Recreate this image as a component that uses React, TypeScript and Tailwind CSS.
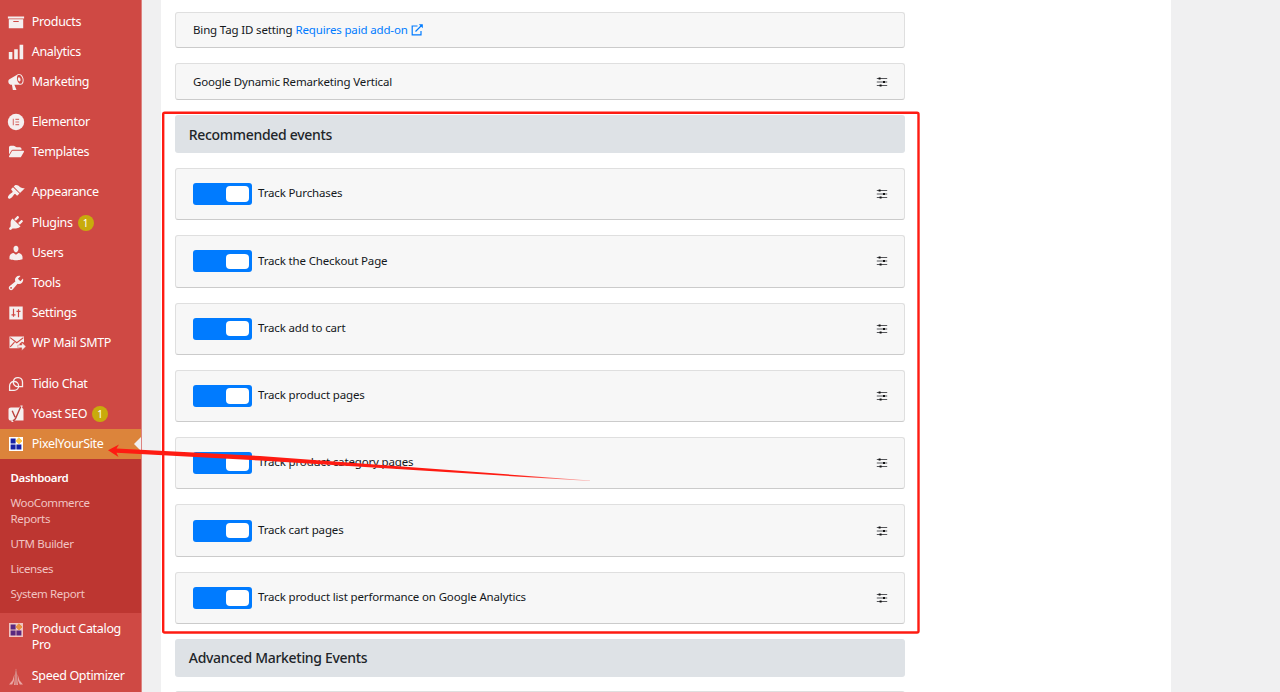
import React from 'react';
import { FaFolderOpen } from 'react-icons/fa6';
import { clsx } from 'clsx';

const Dashicon = ({ d }: { d: string }) => (
  <svg viewBox="0 0 20 20" className="h-[18px] w-[18px]" fill="currentColor">
    <path d={d} />
  </svg>
);

const icons = {
  archive: 'M19 4v2H1V4h18zM2 7h16v10H2V7zm11 3V9H7v1h6z',
  chart: 'M18 18V2h-4v16h4zm-6 0V7H8v11h4zm-6 0v-8H2v8h4z',
  megaphone:
    'M18.15 5.94c.46 1.62.38 3.22-.02 4.48-.42 1.28-1.26 2.18-2.3 2.48-.16.06-.26.06-.4.06-.06.02-.12.02-.18.02-.06.02-.14.02-.22.02h-6.8l2.22 5.5c.02.14-.06.26-.14.34-.08.1-.24.16-.34.16H6.95c-.1 0-.26-.06-.34-.16-.08-.08-.16-.2-.14-.34l-1-5.5H4.25l-.02-.02c-.5.06-1.08-.18-1.54-.62s-.88-1.08-1.06-1.88c-.24-.8-.2-1.56-.02-2.2.18-.62.58-1.08 1.06-1.3l.02-.02 9-5.4c.1-.06.18-.1.24-.16.06-.04.14-.08.24-.12.16-.08.28-.12.5-.18 1.04-.3 2.24.1 3.22.98s1.84 2.24 2.26 3.86zm-2.58 5.98h-.02c.4-.1.74-.34 1.04-.7.58-.7.86-1.76.86-3.04 0-.64-.1-1.3-.28-1.98-.34-1.36-1.02-2.5-1.78-3.24s-1.68-1.1-2.46-.88c-.82.22-1.4.96-1.7 2-.32 1.04-.28 2.36.06 3.72.38 1.36 1 2.5 1.8 3.24.78.74 1.62 1.1 2.48.88zm-2.54-7.08c.22-.04.42-.02.62.04.38.16.76.48 1.02 1s.42 1.2.42 1.78c0 .3-.04.56-.12.8-.18.48-.44.84-.86.94-.34.1-.8-.06-1.14-.4s-.64-.86-.78-1.5c-.18-.62-.12-1.24.02-1.72s.48-.84.82-.94z',
  appearance:
    'M14.48 11.06L7.41 3.99l1.5-1.5c.5-.56 2.3-.47 3.51.32 1.21.8 1.43 1.28 2.91 2.1 1.18.64 2.45 1.26 4.45.85zm-.71.71L6.7 4.7 4.93 6.47c-.39.39-.39 1.02 0 1.41l1.06 1.06c.39.39.39 1.03 0 1.42-.6.6-1.43 1.11-2.21 1.69-.35.26-.7.53-1.01.84C1.43 14.23.4 16.08 1.4 17.07c.99 1 2.84-.03 4.18-1.36.31-.31.58-.66.85-1.02.57-.78 1.08-1.61 1.69-2.21.39-.39 1.02-.39 1.41 0l1.06 1.06c.39.39 1.02.39 1.41 0z',
  plugins:
    'M13.11 4.36L9.87 7.6 8 5.73l3.24-3.24c.35-.34 1.05-.2 1.56.32.52.51.66 1.21.31 1.55zm-8 1.77l.91-1.12 9.01 9.01-1.19.84c-.71.71-2.63 1.16-3.82 1.16H6.14L4.9 17.26c-.59.59-1.54.59-2.12 0-.59-.58-.59-1.53 0-2.12l1.24-1.24v-3.88c0-1.13.4-3.19 1.09-3.89zm7.26 3.97l3.24-3.24c.34-.35 1.04-.21 1.55.31.52.51.66 1.21.31 1.55l-3.24 3.25z',
  users:
    'M10 9.25c-2.27 0-2.73-3.44-2.73-3.44C7 4.02 7.82 2 9.97 2c2.16 0 2.98 2.02 2.71 3.81 0 0-.41 3.44-2.68 3.44zM7.28 10L10 11.82 12.72 10c2.39 0 4.52 2.33 4.52 4.53v2.49s-3.65 1.13-7.24 1.13c-3.65 0-7.24-1.13-7.24-1.13v-2.49c0-2.25 1.94-4.48 4.52-4.53z',
  tools:
    'M16.68 9.77c-1.34 1.34-3.3 1.67-4.95.99l-5.41 6.52c-.99.99-2.59.99-3.58 0s-.99-2.59 0-3.57l6.52-5.42c-.68-1.65-.35-3.61.99-4.95 1.28-1.28 3.12-1.62 4.72-1.06l-2.89 2.89 2.82 2.82 2.86-2.87c.53 1.58.18 3.39-1.08 4.65zM3.81 16.21c.4.39 1.04.39 1.43 0 .4-.4.4-1.04 0-1.43-.39-.4-1.03-.4-1.43 0-.39.39-.39 1.03 0 1.43z',
};

const ElementorIcon = () => (
  <svg viewBox="0 0 18 18" className="h-[18px] w-[18px]">
    <circle cx="9" cy="9" r="8.2" fill="currentColor" />
    <path d="M6.3 5.8v6.4M8.4 6.4h3.7M8.4 9h3.7M8.4 11.6h3.7" stroke="#d8736f" strokeWidth="1.1" />
  </svg>
);

const SettingsIcon = () => (
  <svg viewBox="0 0 18 18" className="h-[18px] w-[18px]">
    <path d="M2.3 2.5h13.4v13H2.3z" fill="currentColor" />
    <path d="M6.5 4.8v8M4.5 10.8h4M11.5 5.2v8M9.5 7.3h4" stroke="#cf4944" strokeWidth="1.2" />
  </svg>
);

const MailIcon = () => (
  <svg viewBox="0 0 18 18" className="ml-[2px] h-[18px] w-[18px] shrink-0">
    <path d="M1.5 2.5h14.5v6l-2-.8-2.5 2v4.5h-10z" fill="currentColor" />
    <path d="M2.2 3.6l6.6 5.2 6.600-5.200M2.200 12.800l4.300-4.700" stroke="#cf4944" strokeWidth="1.1" fill="none" />
    <path d="M9.800 11.100h4V8.400l4.200 4.100-4.200 4v-2.700h-4z" fill="currentColor" stroke="#cf4944" strokeWidth=".4" />
  </svg>
);

const TidioIcon = () => (
  <svg viewBox="0 0 18 18" className="h-[18px] w-[18px]" fill="none" stroke="currentColor" strokeWidth="1.3">
    <path d="M6.4 6.3A4.6 4.6 0 0 1 15.5 7v4.7h-4.6A4.6 4.6 0 0 1 6.4 6.3z" />
    <path d="M7 6.5h.2a4.4 4.4 0 0 1 0 8.8H2.6v-4.4A4.4 4.4 0 0 1 7 6.5z" />
  </svg>
);

const YoastIcon = () => (
  <svg viewBox="0 0 18 18" className="h-[18px] w-[18px]">
    <path
      d="M4 2.5h8.3L13.5.5h2.2l-.6 2.4c1 .3 1.4 1 1.4 1.9v10.7H7l-1 1.6H4.5v-1.6H4c-1.5 0-2.5-.9-2.5-2.3V4.8c0-1.4 1-2.3 2.5-2.3z"
      fill="currentColor"
    />
    <path d="M5.2 5.8l2.900 6.400M13.800 1.500L8.700 13.300c-.6 1.500-1.400 2.200-3 2.300" stroke="#b93f3b" strokeWidth="1.4" fill="none" />
  </svg>
);

const PixelIcon = ({ faded = false }: { faded?: boolean }) => (
  <svg viewBox="0 0 18 18" className="h-[18px] w-[18px]">
    <path d="M2 2h14v14H2z" fill={faded ? '#f1c4c2' : '#fff'} />
    <path d="M3.6 3.6h5v5h-5zM3.6 9.4h5v5h-5zM9.4 9.4h5v5h-5z" fill={faded ? '#592880' : '#1721a5'} />
    <path
      d="M11.8 2.8l3.2 3.1-3.1 2.9-2.8-2.9z"
      fill={faded ? '#e6913f' : '#fdc649'}
      stroke={faded ? '#e6913f' : '#fdc649'}
      strokeLinejoin="round"
    />
  </svg>
);

const SpeedIcon = () => (
  <svg viewBox="0 0 18 18" className="mt-[3px] h-[18px] w-[18px] text-[#f1c4c2]" fill="currentColor">
    <path d="M9 .5c.8 3 1.2 6 1.1 9.2l.8 7.3H7.1l.8-7.3C7.8 6.5 8.2 3.5 9 .5z" opacity=".8" />
    <path d="M7.4 6L7 12.5 5.2 16.5H2l3.6-4.2zM10.6 6l.4 6.5 1.8 4H16l-3.6-4.2z" opacity=".75" />
    <path d="M8.7 2h.6v15h-.6z" fill="#a83a36" />
  </svg>
);

const FilterIcon = () => (
  <svg viewBox="0 0 12 12" className="h-3 w-3">
    <path d="M.8 2.5h10.400M.8 6h10.400M.8 9.500h10.400" stroke="#55565a" />
    <path d="M2.6 1.500h2v2h-2zM7 5h2v2H7zM3.600 8.500h2v2h-2z" fill="#111" />
  </svg>
);

const Badge = () => (
  <span className="ml-[5px] flex h-4 w-4 items-center justify-center rounded-full bg-[#c8ab0c] text-[10px] leading-none tracking-normal text-white">1</span>
);

interface MenuItemProps {
  icon: React.ReactNode;
  label: string;
  badge?: boolean;
  active?: boolean;
}

const MenuItem = ({ icon, label, badge, active }: MenuItemProps) => (
  <div
    className={clsx(
      'relative flex h-[30.1px] shrink-0 items-center pl-[7px] text-[12.5px] leading-4 tracking-[-0.33px] text-white',
      active && 'bg-[#dc843b]'
    )}
  >
    <span className="flex w-[18px] shrink-0 justify-center text-[#f5efef]">{icon}</span>
    <span className="ml-[6.8px] whitespace-nowrap">{label}</span>
    {badge && <Badge />}
    {active && (
      <span className="absolute top-[8px] right-0 border-y-[7px] border-r-[7px] border-y-transparent border-r-[#f0f0f1]" />
    )}
  </div>
);

const Sidebar = () => (
  <aside className="flex h-[692px] w-[142px] shrink-0 flex-col overflow-hidden border-r border-[#dd8380] bg-[#cf4944] pt-[7px] font-['Noto_Sans',sans-serif]">
    <MenuItem icon={<Dashicon d={icons.archive} />} label="Products" />
    <MenuItem icon={<Dashicon d={icons.chart} />} label="Analytics" />
    <MenuItem icon={<Dashicon d={icons.megaphone} />} label="Marketing" />
    <div className="mt-[9.5px]">
      <MenuItem icon={<ElementorIcon />} label="Elementor" />
      <MenuItem icon={<FaFolderOpen size={15} />} label="Templates" />
    </div>
    <div className="mt-[9.5px]">
      <MenuItem icon={<Dashicon d={icons.appearance} />} label="Appearance" />
      <div className="mt-px">
        <MenuItem icon={<Dashicon d={icons.plugins} />} label="Plugins" badge />
      </div>
      <MenuItem icon={<Dashicon d={icons.users} />} label="Users" />
      <MenuItem icon={<Dashicon d={icons.tools} />} label="Tools" />
      <MenuItem icon={<SettingsIcon />} label="Settings" />
      <MenuItem icon={<MailIcon />} label="WP Mail SMTP" />
    </div>
    <div className="mt-[10.8px]">
      <MenuItem icon={<TidioIcon />} label="Tidio Chat" />
      <MenuItem icon={<YoastIcon />} label="Yoast SEO" badge />
      <MenuItem icon={<PixelIcon />} label="PixelYourSite" active />
    </div>
    <div className="flex h-[154px] shrink-0 flex-col gap-[8.5px] bg-[#bd3631] pt-[10.5px] pl-[10.5px] text-[11.5px] leading-[16.4px] tracking-[-0.36px] text-[#f1c4c2]">
      <span className="font-semibold text-white">Dashboard</span>
      <span className="w-[100px]">WooCommerce Reports</span>
      <span>UTM Builder</span>
      <span>Licenses</span>
      <span>System Report</span>
    </div>
    <div className="flex pt-[7.5px] pl-[7px] text-[12.5px] leading-4 tracking-[-0.33px] text-white">
      <PixelIcon faded />
      <span className="ml-[6.8px] w-[100px]">Product Catalog Pro</span>
    </div>
    <div className="mt-[8px]">
      <MenuItem icon={<SpeedIcon />} label="Speed Optimizer" />
    </div>
  </aside>
);

const cardClass =
  'flex shrink-0 items-center justify-between rounded-[3px] border border-[#dfdfdf] border-b-[#cbcbcb] bg-[#f7f7f7] pr-[16px] pl-[17.5px]';

const SectionHeader = ({ title }: { title: string }) => (
  <h2 className="flex h-[38px] shrink-0 items-center rounded-[3px] bg-[#dee2e6] pl-[14.3px] text-[14px] font-medium tracking-[-0.31px] text-[#212529]">
    {title}
  </h2>
);

const EventCard = ({ label }: { label: string }) => (
  <div className={clsx(cardClass, 'h-[52.4px]')}>
    <div className="flex items-center">
      <span className="flex h-[22px] w-[58.5px] items-center justify-end rounded-[3px] bg-[#007bff] pr-[3px]">
        <span className="h-[15.5px] w-[23px] rounded-[4px] bg-white" />
      </span>
      <span className="ml-[6.5px] pb-[2.5px]">{label}</span>
    </div>
    <FilterIcon />
  </div>
);

const events = [
  'Track Purchases',
  'Track the Checkout Page',
  'Track add to cart',
  'Track product pages',
  'Track product category pages',
  'Track cart pages',
  'Track product list performance on Google Analytics',
];

export default function App() {
  return (
    <div className="relative flex h-[692px] w-[1280px] overflow-hidden bg-[#f0f0f1]">
      <Sidebar />
      <main className="ml-[19px] flex w-[1010px] flex-col overflow-hidden bg-white pt-[11.7px] pl-[13.5px] font-['Noto_Sans',sans-serif] text-[11.5px] tracking-[-0.15px] text-[#14181b]">
        <div className="flex w-[730.5px] flex-col gap-[14.9px]">
          <div className={clsx(cardClass, 'h-[36.8px]')}>
            <p className="flex items-center">
              Bing Tag ID setting
              <span className="ml-[3px] text-[#007bff]">Requires paid add-on</span>
              <svg viewBox="0 0 12 12" className="ml-[3px] h-3 w-3" fill="none" stroke="#007bff" strokeWidth="1.2">
                <path d="M6.5 2H1.2v8.8H10V7M4.5 7.5l6-6" />
                <path d="M7.8.2h4v4z" fill="#007bff" stroke="none" />
              </svg>
            </p>
          </div>
          <div className={clsx(cardClass, 'h-[36.8px]')}>
            <span>Google Dynamic Remarketing Vertical</span>
            <FilterIcon />
          </div>
          <SectionHeader title="Recommended events" />
          {events.map((label) => (
            <EventCard key={label} label={label} />
          ))}
          <SectionHeader title="Advanced Marketing Events" />
          <div className={clsx(cardClass, '-mt-[0.7px] h-[52.4px]')} />
        </div>
      </main>

      {/* annotation box and arrow */}
      <svg className="absolute top-[105px] left-[155px]" width="775" height="535" viewBox="155 105 775 535">
        <rect x="163.2" y="112.700" width="755.300" height="519.800" rx="1.500" fill="none" stroke="#fe1b12" strokeWidth="2.400" />
      </svg>
      <svg className="absolute top-[430px] left-[100px]" width="500" height="60" viewBox="100 430 500 60">
        <defs>
          <linearGradient id="tail" x1="0" x2="1">
            <stop offset=".85" stopColor="#fe1b12" />
            <stop offset="1" stopColor="#fe1b12" stopOpacity=".3" />
          </linearGradient>
        </defs>
        <path d="M108 450.3L119 444.500 116.500 448.500 260 456 590 480.500 590 481 260 460.500 116.500 452.800 118.500 457z" fill="url(#tail)" />
      </svg>
    </div>
  );
}
